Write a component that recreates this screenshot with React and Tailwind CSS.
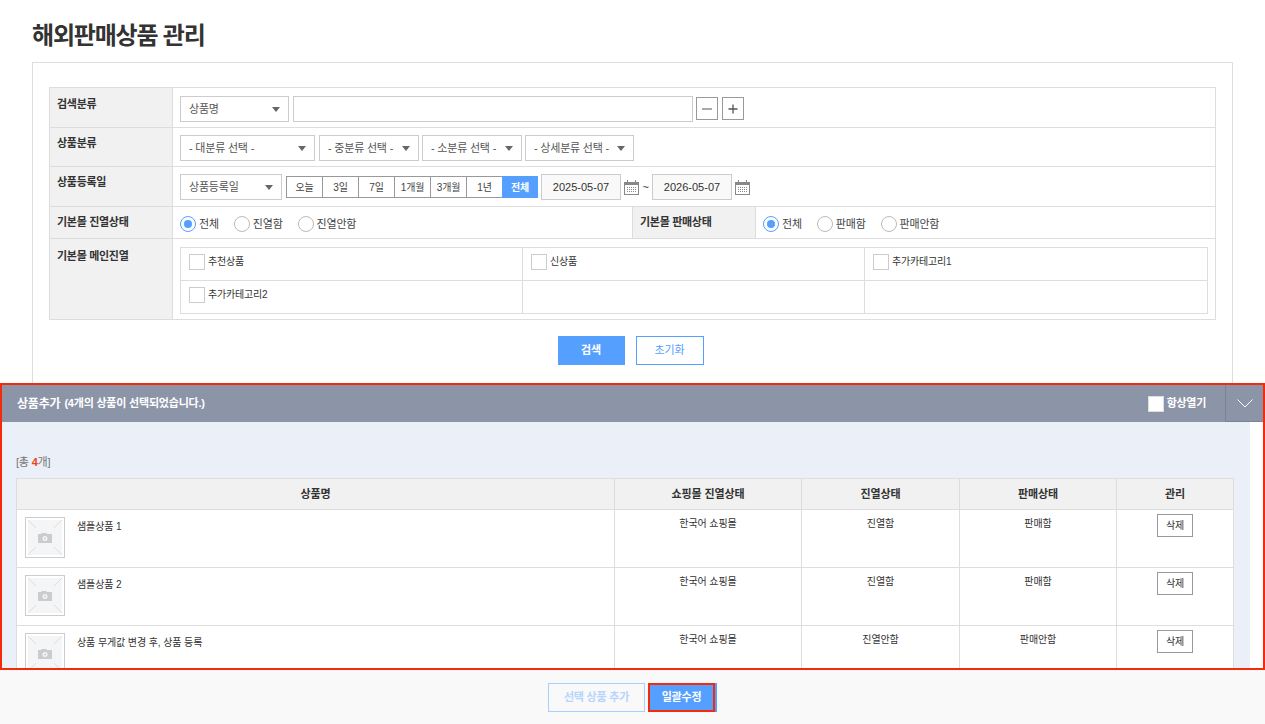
import React from 'react';

const FONT = '[font-family:"Liberation_Sans","Noto_Sans_CJK_KR",sans-serif]';

const Select = ({ label, className }) => (
    <div className={`h-[26px] bg-white border border-[#ccc] flex items-center justify-between pl-[8px] text-[11px] text-[#555] ${className}`}>
        <span>{label}</span>
        <svg width="8" height="5" viewBox="0 0 8 5" className="mr-[8px]"><path d="M0 0h8L4 5z" fill="#666" /></svg>
    </div>
);

const Radio = ({ label, checked, className = '' }) => (
    <div className={`flex items-center gap-[3px] ${className}`}>
        <div className={`w-[16px] h-[16px] rounded-full border bg-white flex items-center justify-center ${checked ? 'border-[#55a0ff]' : 'border-[#bbb]'}`}>
            {checked && <div className="w-[8px] h-[8px] rounded-full bg-[#55a0ff]" />}
        </div>
        <span className="text-[11px] leading-[14px] text-[#444]">{label}</span>
    </div>
);

const Check = ({ label }) => (
    <div className="flex items-start gap-[3px]">
        <div className="w-[16px] h-[16px] border border-[#ccc] bg-white" />
        <span className="text-[10px] leading-[16px] text-[#333]">{label}</span>
    </div>
);

const Calendar = () => (
    <svg width="15" height="15" viewBox="0 0 15 15" className="shrink-0">
        <rect x="0.5" y="2.5" width="14" height="12" fill="#fff" stroke="#888" />
        <rect x="0" y="2" width="15" height="3" fill="#888" />
        <rect x="3" y="0" width="1" height="3" fill="#888" />
        <rect x="11" y="0" width="1" height="3" fill="#888" />
        <path d="M3 7.5h9M3 9.5h9M3 11.5h9" stroke="#888" strokeDasharray="1 1" />
    </svg>
);

const Label = ({ children, className = 'pt-[7px]' }) => (
    <div className={`w-[123px] shrink-0 bg-[#f1f1f1] border-r border-[#ddd] pl-[7px] text-[11px] font-bold text-[#333] tracking-[-0.3px] ${className}`}>
        {children}
    </div>
);

const DateInput = ({ value }) => (
    <div className="w-[80px] h-[26px] border border-[#ccc] bg-[#f9f9f9] flex items-center justify-center text-[11px] text-[#333] tracking-normal">{value}</div>
);

const Thumb = () => (
    <svg width="40" height="41" viewBox="0 0 40 41" className="shrink-0">
        <rect x="0.5" y="0.5" width="39" height="40" fill="#fff" stroke="#ccc" />
        <rect x="3" y="3" width="34" height="35" fill="#f4f5f7" />
        <path d="M3 3l8 8M37 3l-8 8M3 38l8-8M37 38l-8-8" stroke="#ddd" fill="none" />
        <path d="M13 17h3l1-1h4l1 1h5v9H13z" fill="#ccc" />
        <circle cx="20" cy="21.5" r="2.5" fill="#f4f5f7" />
        <circle cx="20" cy="21.5" r="1" fill="#ccc" />
    </svg>
);

const products = [
    { name: '샘플상품 1', display: '진열함', sale: '판매함' },
    { name: '샘플상품 2', display: '진열함', sale: '판매함' },
    { name: '상품 무게값 변경 후, 상품 등록', display: '진열안함', sale: '판매안함' },
];

const ranges = ['오늘', '3일', '7일', '1개월', '3개월', '1년'];

export default function App() {
    return (
        <div className={`${FONT} w-[1265px] h-[724px] overflow-hidden bg-white flex flex-col tracking-[-0.2px]`}>
            {/* Search */}
            <div className="h-[383px] shrink-0 overflow-hidden px-[32px]">
                <h1 className="h-[62px] pt-[19px] text-[24px] leading-[34px] font-bold text-[#333] tracking-[-1.2px]">해외판매상품 관리</h1>
                <div className="w-[1201px] h-[400px] border border-[#ddd] pt-[24px] px-[16px]">
                    <div className="w-[1167px] border border-[#ddd] text-[11px]">
                        <div className="flex h-[40px] border-b border-[#ddd]">
                            <Label className="pt-[8px]">검색분류</Label>
                            <div className="flex items-start pl-[7px] pt-[8px] gap-[4px]">
                                <Select label="상품명" className="w-[109px]" />
                                <div className="w-[400px] h-[26px] border border-[#ccc]" />
                                <div className="ml-[-1px] mt-[1px] w-[22px] h-[23px] border border-[#999] flex items-center justify-center">
                                    <svg width="12" height="12" viewBox="0 0 12 12"><path d="M1 6h10" stroke="#555" /></svg>
                                </div>
                                <div className="mt-[1px] w-[22px] h-[23px] border border-[#999] flex items-center justify-center">
                                    <svg width="12" height="12" viewBox="0 0 12 12"><path d="M1.5 6h9M6 1.5v9" stroke="#555" strokeWidth="1.3" /></svg>
                                </div>
                            </div>
                        </div>
                        <div className="flex h-[39px] border-b border-[#ddd]">
                            <Label>상품분류</Label>
                            <div className="flex items-start pl-[7px] pt-[7px]">
                                <Select label="- 대분류 선택 -" className="w-[135px]" />
                                <Select label="- 중분류 선택 -" className="w-[100px] ml-[4px]" />
                                <Select label="- 소분류 선택 -" className="w-[100px] ml-[3px]" />
                                <Select label="- 상세분류 선택 -" className="w-[109px] ml-[3px]" />
                            </div>
                        </div>
                        <div className="flex h-[40px] border-b border-[#ddd]">
                            <Label>상품등록일</Label>
                            <div className="flex items-start pl-[7px] pt-[7px]">
                                <Select label="상품등록일" className="w-[102px]" />
                                <div className="flex ml-[4px] mt-[2px] h-[22px]">
                                    {ranges.map((r) => (
                                        <div key={r} className="w-[36px] border-y border-l border-[#999] flex items-center justify-center text-[10px] text-[#444]">{r}</div>
                                    ))}
                                    <div className="w-[36px] bg-[#55a0ff] flex items-center justify-center text-[10px] font-bold text-white">전체</div>
                                </div>
                                <div className="flex items-center ml-[3px]">
                                    <DateInput value="2025-05-07" />
                                    <div className="ml-[3px]"><Calendar /></div>
                                    <span className="w-[13px] text-center text-[11px] text-[#333]">~</span>
                                    <DateInput value="2026-05-07" />
                                    <div className="ml-[3px]"><Calendar /></div>
                                </div>
                            </div>
                        </div>
                        <div className="flex h-[32px] border-b border-[#ddd]">
                            <Label>기본몰 진열상태</Label>
                            <div className="w-[460px] flex items-start pl-[7px] pt-[9px] border-r border-[#ddd]">
                                <Radio label="전체" checked />
                                <Radio label="진열함" className="ml-[15px]" />
                                <Radio label="진열안함" className="ml-[15px]" />
                            </div>
                            <Label>기본몰 판매상태</Label>
                            <div className="flex items-start pl-[7px] pt-[9px]">
                                <Radio label="전체" checked />
                                <Radio label="판매함" className="ml-[15px]" />
                                <Radio label="판매안함" className="ml-[15px]" />
                            </div>
                        </div>
                        <div className="flex h-[80px]">
                            <Label className="pt-[9px]">기본몰 메인진열</Label>
                            <div className="pl-[7px] pt-[8px]">
                                <div className="w-[1028px] h-[67px] border border-[#ddd] grid grid-cols-[342px_342px_1fr] grid-rows-2">
                                    <div className="pl-[8px] pt-[6px] border-r border-b border-[#ddd]"><Check label="추천상품" /></div>
                                    <div className="pl-[8px] pt-[6px] border-r border-b border-[#ddd]"><Check label="신상품" /></div>
                                    <div className="pl-[8px] pt-[6px] border-b border-[#ddd]"><Check label="추가카테고리1" /></div>
                                    <div className="pl-[8px] pt-[6px] border-r border-[#ddd]"><Check label="추가카테고리2" /></div>
                                    <div className="border-r border-[#ddd]" />
                                    <div />
                                </div>
                            </div>
                        </div>
                    </div>
                    <div className="flex justify-center gap-[11px] mt-[16px] pr-[4px]">
                        <div className="w-[67px] h-[29px] bg-[#55a0ff] flex items-center justify-center text-[11px] font-bold text-white">검색</div>
                        <div className="w-[68px] h-[29px] border border-[#55a0ff] flex items-center justify-center text-[11px] text-[#55a0ff]">초기화</div>
                    </div>
                </div>
            </div>

            {/* Selected products panel */}
            <div className="h-[287px] shrink-0 border-2 border-[#f42a0a] overflow-hidden flex flex-col">
                <div className="h-[37px] shrink-0 bg-[#8c94a8] flex items-center pl-[15px] text-white">
                    <span className="text-[12px] font-bold">상품추가</span>
                    <span className="text-[11px] font-bold ml-[4px]">(4개의 상품이 선택되었습니다.)</span>
                    <div className="ml-auto flex items-center gap-[3px] mr-[19px]">
                        <div className="w-[16px] h-[16px] bg-white border border-[#ddd]" />
                        <span className="text-[11px] font-bold tracking-[-0.3px]">항상열기</span>
                    </div>
                    <div className="w-[38px] h-full border-l border-b border-[#7a8296] flex items-center justify-center">
                        <svg width="16" height="9" viewBox="0 0 16 9"><path d="M0.5 0.5L8 8l7.5-7.5" fill="none" stroke="#fff" /></svg>
                    </div>
                </div>
                <div className="w-[1248px] flex-1 bg-[#ebf0f8] pl-[14px] pt-[33px] overflow-hidden">
                    <div className="h-[23px] text-[11px] leading-[14px] text-[#777]">[총 <b className="text-[#f0440f]">4</b>개]</div>
                    <table className="w-[1217px] table-fixed border-collapse bg-white text-[10px] text-[#333] tracking-[-0.1px]">
                        <colgroup>
                            <col className="w-[598px]" />
                            <col className="w-[187px]" />
                            <col className="w-[158px]" />
                            <col className="w-[157px]" />
                            <col className="w-[117px]" />
                        </colgroup>
                        <thead>
                            <tr className="h-[31px] bg-[#f1f1f1] text-[11px]">
                                {['상품명', '쇼핑몰 진열상태', '진열상태', '판매상태', '관리'].map((h) => (
                                    <th key={h} className="border border-[#ddd] font-bold">{h}</th>
                                ))}
                            </tr>
                        </thead>
                        <tbody>
                            {products.map((p) => (
                                <tr key={p.name} className="h-[58px]">
                                    <td className="border border-[#ddd] align-top pl-[8px] pt-[7px]">
                                        <div className="flex items-start gap-[12px]">
                                            <Thumb />
                                            <span className="mt-[2px]">{p.name}</span>
                                        </div>
                                    </td>
                                    <td className="border border-[#ddd] align-top text-center pt-[6px]">한국어 쇼핑몰</td>
                                    <td className="border border-[#ddd] align-top text-center pt-[6px]">{p.display}</td>
                                    <td className="border border-[#ddd] align-top text-center pt-[6px]">{p.sale}</td>
                                    <td className="border border-[#ddd] align-top pt-[4px]">
                                        <div className="w-[36px] h-[23px] mx-auto border border-[#999] flex items-center justify-center">삭제</div>
                                    </td>
                                </tr>
                            ))}
                        </tbody>
                    </table>
                </div>
            </div>

            {/* Footer actions */}
            <div className="flex-1 bg-[#f9f9f9] flex justify-center items-start pt-[13px]">
                <div className="w-[97px] h-[29px] border border-[#a8cfff] flex items-center justify-center text-[11px] font-bold text-[#b5d5ff]">선택 상품 추가</div>
                <div className="w-[69px] h-[29px] ml-[3px] bg-[#55a0ff]">
                    <div className="w-[67px] h-[29px] border-2 border-[#f42a0a] flex items-center justify-center text-[11px] font-bold text-white">일괄수정</div>
                </div>
            </div>
        </div>
    );
}
